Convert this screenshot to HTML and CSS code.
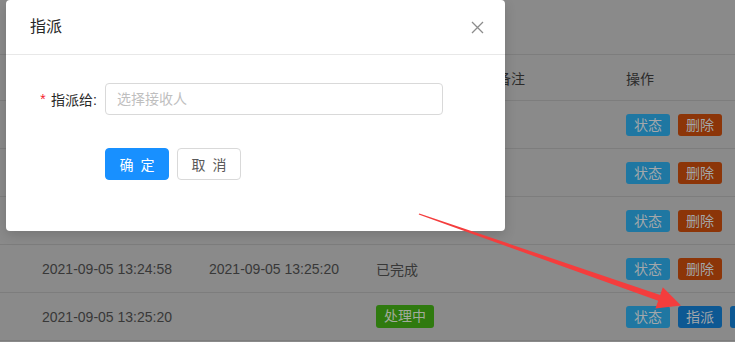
FILE: index.html
```html
<!DOCTYPE html>
<html lang="zh">

<head>
  <meta charset="UTF-8">
  <meta name="viewport" content="width=device-width, initial-scale=1.0">

  <link rel="stylesheet" href="styles.css">
</head>

<body>
  <div class="page">
    <div class="toolbar"></div>

    <div class="table">
      <div class="row head">
        <div></div>
        <div class="cell">创建时间</div>
        <div class="cell">更新时间</div>
        <div class="cell">状态</div>
        <div class="cell">备注</div>
        <div class="cell">操作</div>
      </div>

      <div class="row">
        <div></div>
        <div class="cell">2021-09-05 13:20:11</div>
        <div class="cell">2021-09-05 13:21:02</div>
        <div class="cell">已完成</div>
        <div class="cell"></div>
        <div class="cell actions">
          <span class="btn info">状态</span>
          <span class="btn danger">删除</span>
        </div>
      </div>

      <div class="row">
        <div></div>
        <div class="cell">2021-09-05 13:22:40</div>
        <div class="cell">2021-09-05 13:23:15</div>
        <div class="cell">已完成</div>
        <div class="cell"></div>
        <div class="cell actions">
          <span class="btn info">状态</span>
          <span class="btn danger">删除</span>
        </div>
      </div>

      <div class="row">
        <div></div>
        <div class="cell">2021-09-05 13:23:51</div>
        <div class="cell">2021-09-05 13:24:30</div>
        <div class="cell">已完成</div>
        <div class="cell"></div>
        <div class="cell actions">
          <span class="btn info">状态</span>
          <span class="btn danger">删除</span>
        </div>
      </div>

      <div class="row">
        <div></div>
        <div class="cell">2021-09-05 13:24:58</div>
        <div class="cell">2021-09-05 13:25:20</div>
        <div class="cell">已完成</div>
        <div class="cell"></div>
        <div class="cell actions">
          <span class="btn info">状态</span>
          <span class="btn danger">删除</span>
        </div>
      </div>

      <div class="row">
        <div></div>
        <div class="cell">2021-09-05 13:25:20</div>
        <div class="cell"></div>
        <div class="cell"><span class="tag">处理中</span></div>
        <div class="cell"></div>
        <div class="cell actions">
          <span class="btn info">状态</span>
          <span class="btn primary">指派</span>
          <span class="btn primary"></span>
        </div>
      </div>
    </div>

    <!-- assign dialog -->
    <div class="modal">
      <div class="modal-header">
        <span class="modal-title">指派</span>
        <svg class="modal-close" width="13" height="13" viewBox="0 0 13 13">
          <path d="M1 1 L12 12 M12 1 L1 12" stroke="#8c8c8c" stroke-width="1.3" fill="none" />
        </svg>
      </div>

      <div class="modal-body">
        <div class="form-item">
          <label class="form-label"><span class="required">*</span>指派给:</label>
          <input class="input" type="text" placeholder="选择接收人">
        </div>

        <div class="form-buttons">
          <button class="button button-primary"><span>确</span><span>定</span></button>
          <button class="button"><span>取</span><span>消</span></button>
        </div>
      </div>
    </div>

    <!-- annotation arrow -->
    <svg class="arrow" width="735" height="342" viewBox="0 0 735 342">
      <polygon points="419.3,213.4 660.2,295 662.8,287.2 681,305.5 655.4,308.4 658.2,300.8 418.7,214.6" fill="#f43d3d" />
    </svg>
  </div>
</body>

</html>
```

FILE: styles.css
```css
* {
  margin: 0;
  box-sizing: border-box;
}

body {
  width: 100vw;
  height: 100vh;
  overflow: hidden;
  background: #8a8a8a;
  font-family: 'Liberation Sans', 'Noto Sans CJK SC', sans-serif;
  font-size: 14px;
  color: #383838;
}

.page {
  position: relative;
  width: 100%;
  height: 100%;
}

.toolbar {
  height: 54px;
}

/* table, drawn under the modal mask */
.table {
  border-top: 1px solid #7d7d7d;
}

.row {
  display: grid;
  grid-template-columns: 26px 167px 167px 121px 129px 1fr;
  align-items: center;
  height: 48px;
  border-bottom: 1px solid #7d7d7d;
}

.row.head {
  height: 46px;
  color: #2b2b2b;
}

.cell {
  padding-left: 16px;
  white-space: nowrap;
}

.actions {
  display: flex;
  gap: 8px;
  overflow: hidden;
}

.btn {
  flex: none;
  width: 44px;
  height: 22px;
  line-height: 22px;
  border-radius: 3px;
  text-align: center;
  color: #a3a7aa;
}

.btn.info {
  background: #1f77a2;
}

.btn.danger {
  background: #8c3508;
}

.btn.primary {
  background: #0d5893;
}

.tag {
  display: inline-block;
  height: 23px;
  line-height: 23px;
  padding: 0 8px;
  border-radius: 3px;
  background: #2f7a0f;
  color: #a2ab9c;
}

/* modal */
.modal {
  position: absolute;
  top: 0;
  left: 6px;
  width: 499px;
  height: 231px;
  background: #fff;
  border-radius: 4px;
  box-shadow: 0 4px 12px rgba(0, 0, 0, 0.15);
}

.modal-header {
  display: flex;
  justify-content: space-between;
  align-items: center;
  height: 55px;
  padding: 0 21px 0 24px;
  border-bottom: 1px solid #e8e8e8;
}

.modal-title {
  font-size: 16px;
  line-height: 22px;
  color: #262626;
}

.modal-body {
  padding: 28px 24px 0;
}

.form-item {
  display: flex;
  align-items: center;
}

.form-label {
  width: 67px;
  margin-right: 8px;
  text-align: right;
  color: #262626;
}

.required {
  margin-right: 4px;
  color: #f5222d;
  font-family: 'Liberation Mono', monospace;
}

.input {
  width: 338px;
  height: 32px;
  padding: 0 11px;
  border: 1px solid #d9d9d9;
  border-radius: 4px;
  font-family: inherit;
  font-size: 14px;
  color: #262626;
  outline: none;
}

.input::placeholder {
  color: #bfbfbf;
}

.form-buttons {
  display: flex;
  gap: 8px;
  margin-top: 33px;
  padding-left: 75px;
}

.button {
  display: flex;
  justify-content: center;
  align-items: center;
  gap: 7px;
  width: 64px;
  height: 32px;
  padding: 0;
  border: 1px solid #d9d9d9;
  border-radius: 4px;
  background: #fff;
  font-family: inherit;
  font-size: 14px;
  color: #595959;
}

.button-primary {
  border-color: #1890ff;
  background: #1890ff;
  color: #fff;
}

.arrow {
  position: absolute;
  top: 0;
  left: 0;
  pointer-events: none;
}
```
